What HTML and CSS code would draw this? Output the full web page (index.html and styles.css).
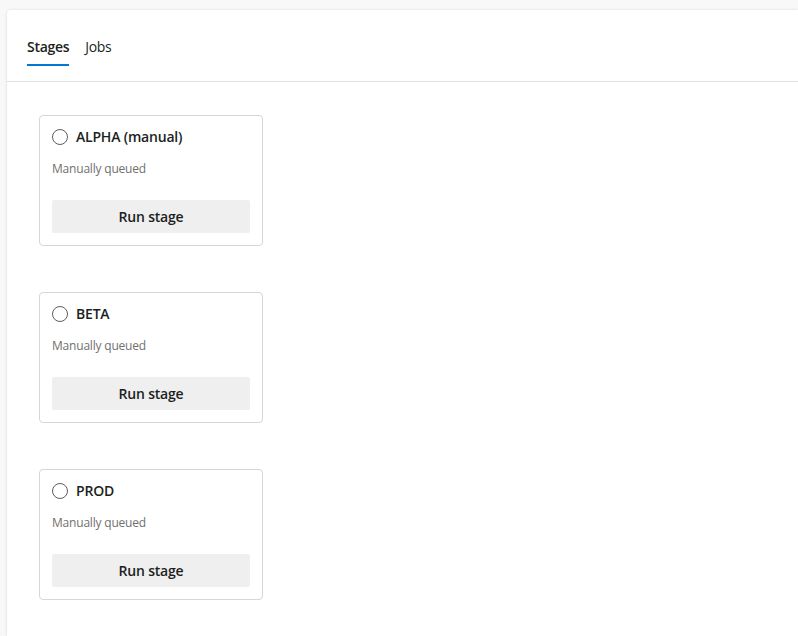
FILE: index.html
```html
<!DOCTYPE html>
<html>
<head>
<meta charset="utf-8">
<link rel="stylesheet" href="styles.css">
</head>
<body>
<div class="panel">
  <div class="tabs">
    <div class="tab active">Stages</div>
    <div class="tab">Jobs</div>
  </div>
  <div class="stages">
    <div class="card">
      <div class="card-head"><span class="radio"></span><span class="title">ALPHA (manual)</span></div>
      <div class="sub">Manually queued</div>
      <button class="run">Run stage</button>
    </div>
    <div class="card">
      <div class="card-head"><span class="radio"></span><span class="title">BETA</span></div>
      <div class="sub">Manually queued</div>
      <button class="run">Run stage</button>
    </div>
    <div class="card">
      <div class="card-head"><span class="radio"></span><span class="title">PROD</span></div>
      <div class="sub">Manually queued</div>
      <button class="run">Run stage</button>
    </div>
  </div>
</div>
</body>
</html>
```
FILE: styles.css
```css
* { box-sizing: border-box; }
html, body { margin: 0; padding: 0; }
body {
  background: #f8f8f8;
  font-family: "Segoe UI", "Open Sans", "Noto Sans", sans-serif;
  color: #201f1e;
  overflow: hidden;
}
.panel {
  margin: 10px 0 0 7px;
  background: #fff;
  border-top-left-radius: 4px;
  box-shadow: 0 0 3px rgba(0,0,0,0.12), 0 1px 2px rgba(0,0,0,0.06);
  min-height: calc(100vh - 10px);
}
.tabs {
  display: flex;
  gap: 16px;
  padding: 27px 20px 0;
  border-bottom: 1px solid #e1e1e1;
  height: 72px;
}
.tab {
  font-size: 14px;
  line-height: 20px;
  height: 29px;
  letter-spacing: -0.3px;
}
.tab.active {
  font-weight: 600;
  border-bottom: 2px solid #0078d4;
}
.stages {
  display: flex;
  flex-direction: column;
  gap: 46px;
  padding: 33px 0 0 32px;
}
.card {
  width: 224px;
  height: 131px;
  border: 1px solid #d6d6d6;
  border-radius: 4px;
  padding: 11px 12px 11px 12px;
  display: flex;
  flex-direction: column;
}
.card-head {
  display: flex;
  align-items: center;
  gap: 8px;
  height: 20px;
}
.radio {
  width: 16px;
  height: 16px;
  border: 1.5px solid #605e5c;
  border-radius: 50%;
  flex: none;
}
.title {
  font-size: 14px;
  font-weight: 600;
  line-height: 20px;
  letter-spacing: -0.2px;
}
.sub {
  margin-top: 14px;
  font-size: 12px;
  line-height: 16px;
  color: #707070;
  letter-spacing: -0.2px;
}
.run {
  margin-top: 23px;
  height: 33px;
  width: 198px;
  border: none;
  border-radius: 2px;
  background: #efefef;
  font-family: inherit;
  font-size: 14px;
  font-weight: 600;
  color: #201f1e;
  letter-spacing: -0.2px;
  padding: 0;
}
```
